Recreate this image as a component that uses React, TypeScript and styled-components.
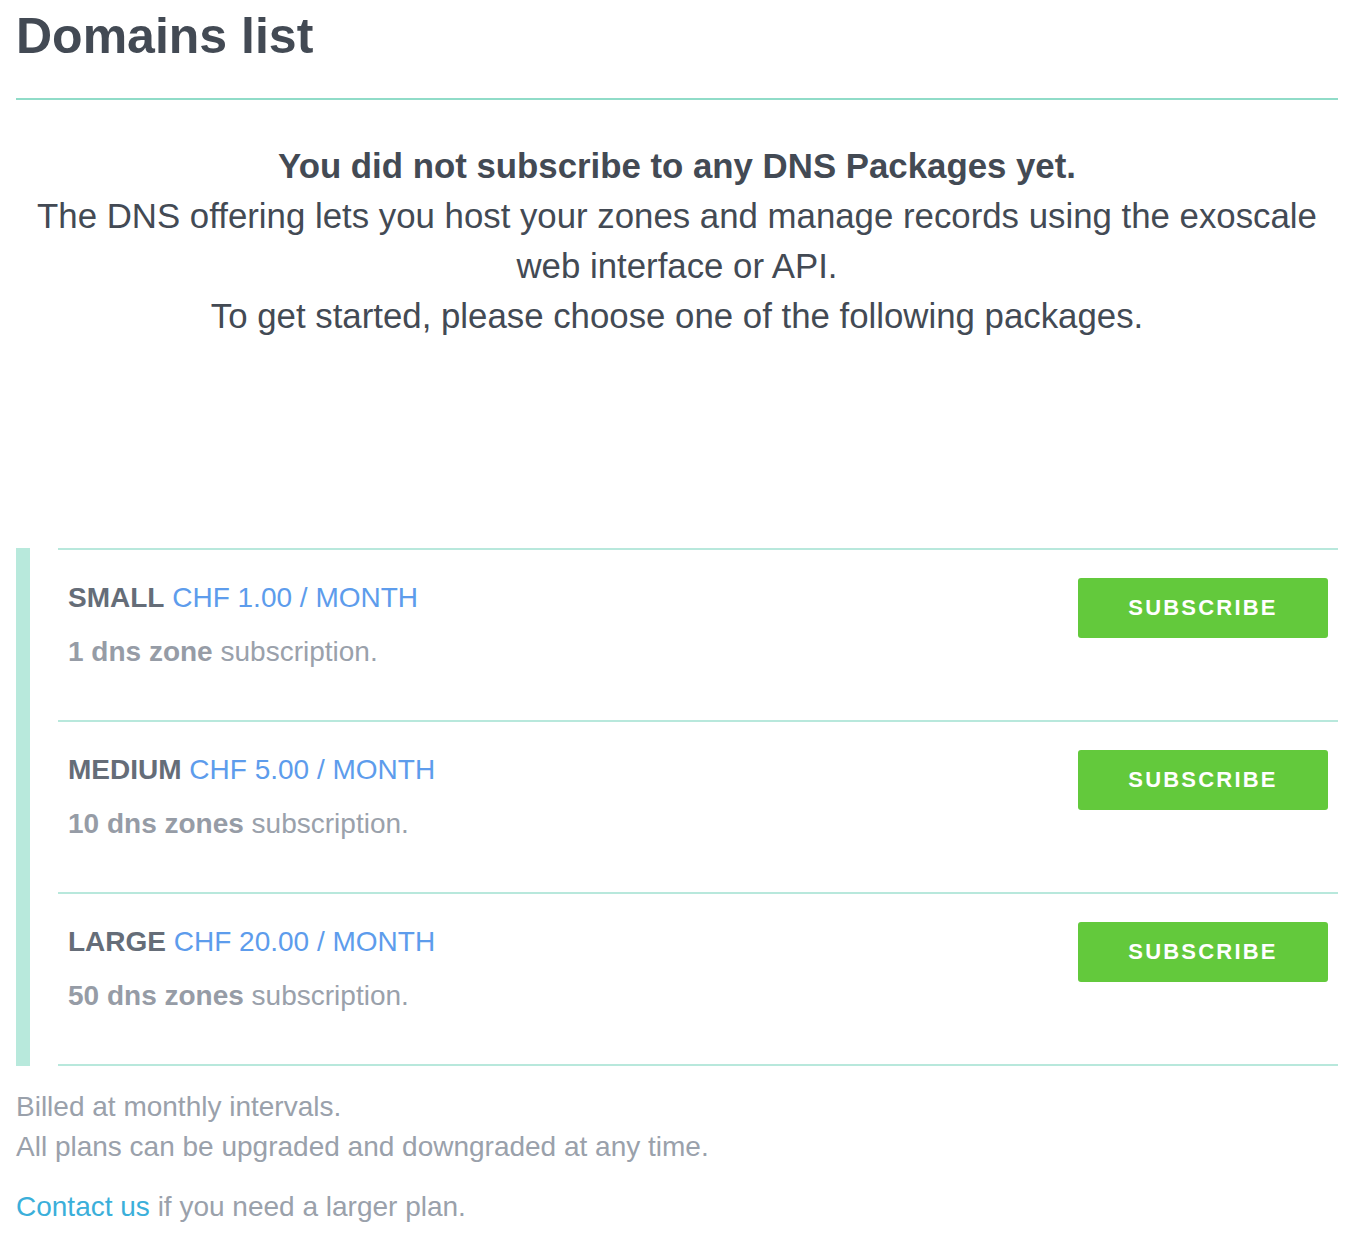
import React from "react";
import styled, { createGlobalStyle } from "styled-components";

const GlobalStyle = createGlobalStyle`
  html, body {
    margin: 0;
    padding: 0;
    background: #ffffff;
  }
  body {
    font-family: "Liberation Sans", Arial, Helvetica, sans-serif;
    color: #434a54;
    -webkit-font-smoothing: antialiased;
  }
`;

const Page = styled.div`
  padding: 0 16px 40px 16px;
`;

const Header = styled.header`
  padding-top: 6px;
  padding-bottom: 32px;
  border-bottom: 2px solid #90dcc8;
`;

const Title = styled.h1`
  margin: 0;
  font-size: 50px;
  line-height: 60px;
  font-weight: 700;
  color: #434a54;
`;

const Intro = styled.div`
  margin-top: 41px;
  text-align: center;
  font-size: 34.8px;
  line-height: 50px;
  color: #434a54;
`;

const IntroLead = styled.div`
  font-weight: 700;
`;

const IntroLine = styled.div`
  font-weight: 400;
`;

const Plans = styled.section`
  margin-top: 207px;
  border-left: 14px solid #b8e9dc;
  padding-left: 28px;
`;

const PlanRow = styled.div`
  display: flex;
  align-items: flex-start;
  justify-content: space-between;
  border-top: 2px solid #b8e8dc;
  height: 170px;
  box-sizing: content-box;
  padding: 0 10px;

  &:last-child {
    border-bottom: 2px solid #b8e8dc;
  }
`;

const PlanInfo = styled.div`
  padding-top: 28px;
`;

const PlanTitle = styled.div`
  font-size: 28px;
  line-height: 40px;
`;

const PlanName = styled.span`
  font-weight: 700;
  color: #656d78;
`;

const PlanPrice = styled.span`
  color: #5d9cec;
`;

const PlanDesc = styled.div`
  margin-top: 14px;
  font-size: 28px;
  line-height: 40px;
  color: #9aa1ab;

  strong {
    font-weight: 700;
    color: #969ca6;
  }
`;

const SubscribeButton = styled.button`
  margin-top: 28px;
  width: 250px;
  height: 60px;
  border: none;
  border-radius: 3px;
  background: #63c93c;
  color: #ffffff;
  font-family: "Liberation Sans", Arial, Helvetica, sans-serif;
  font-size: 22px;
  font-weight: 700;
  letter-spacing: 2.2px;
  text-transform: uppercase;
  cursor: pointer;
  padding: 0;
`;

const Footer = styled.div`
  margin-top: 21px;
  font-size: 28px;
  line-height: 40px;
  color: #9aa1ab;
`;

const FooterPara = styled.p`
  margin: 0 0 20px 0;
`;

const ContactLink = styled.a`
  color: #3bafda;
  text-decoration: none;
`;

type Plan = {
  name: string;
  price: string;
  amount: string;
};

const plans: Plan[] = [
  { name: "SMALL", price: "CHF 1.00 / MONTH", amount: "1 dns zone" },
  { name: "MEDIUM", price: "CHF 5.00 / MONTH", amount: "10 dns zones" },
  { name: "LARGE", price: "CHF 20.00 / MONTH", amount: "50 dns zones" },
];

export default function App() {
  return (
    <>
      <GlobalStyle />
      <Page>
        <Header>
          <Title>Domains list</Title>
        </Header>
        <Intro>
          <IntroLead>You did not subscribe to any DNS Packages yet.</IntroLead>
          <IntroLine>
            The DNS offering lets you host your zones and manage records using the exoscale web interface or API.
          </IntroLine>
          <IntroLine>To get started, please choose one of the following packages.</IntroLine>
        </Intro>
        <Plans>
          {plans.map((p) => (
            <PlanRow key={p.name}>
              <PlanInfo>
                <PlanTitle>
                  <PlanName>{p.name}</PlanName> <PlanPrice>{p.price}</PlanPrice>
                </PlanTitle>
                <PlanDesc>
                  <strong>{p.amount}</strong> subscription.
                </PlanDesc>
              </PlanInfo>
              <SubscribeButton>Subscribe</SubscribeButton>
            </PlanRow>
          ))}
        </Plans>
        <Footer>
          <FooterPara>
            Billed at monthly intervals.
            <br />
            All plans can be upgraded and downgraded at any time.
          </FooterPara>
          <FooterPara>
            <ContactLink href="#">Contact us</ContactLink> if you need a larger plan.
          </FooterPara>
        </Footer>
      </Page>
    </>
  );
}
